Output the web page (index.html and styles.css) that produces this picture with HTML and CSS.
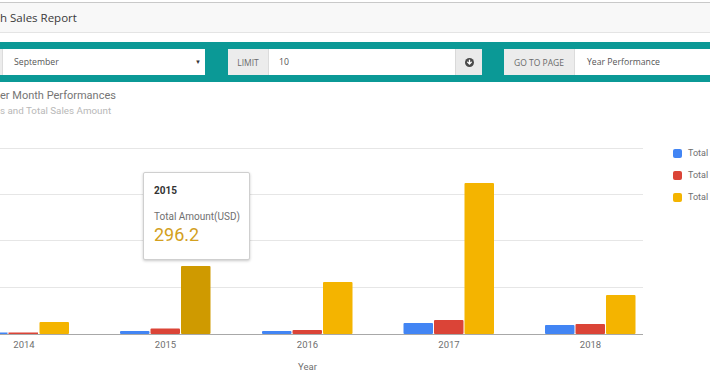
FILE: index.html
```html
<!DOCTYPE html>
<html lang="en">
<head>
<meta charset="utf-8">
<title>Sales Report</title>
<link rel="stylesheet" href="styles.css">
</head>
<body>
<div class="page">
  <header class="report-head">
    <h1 class="report-title">h Sales Report</h1>
  </header>

  <div class="filters">
    <div class="group g-month">
      <span class="addon stub"></span>
      <div class="field select">September<span class="caret">&#9660;</span></div>
    </div>
    <div class="group g-limit">
      <span class="addon">LIMIT</span>
      <div class="field">10</div>
      <span class="btn">
        <svg width="9" height="9" viewBox="0 0 10 10" aria-hidden="true">
          <circle cx="5" cy="5" r="5" fill="#4a4a4a"/>
          <path d="M5 2.3v4.2M2.9 4.6L5 6.8 7.1 4.6" fill="none" stroke="#fff" stroke-width="1.5" stroke-linecap="round" stroke-linejoin="round"/>
        </svg>
      </span>
    </div>
    <div class="group g-page">
      <span class="addon">GO TO PAGE</span>
      <div class="field">Year Performance</div>
    </div>
  </div>

  <section class="chart">
    <div class="chart-title">er Month Performances</div>
    <div class="chart-sub">s and Total Sales Amount</div>
    <div class="chart-body">
      <div class="plot">
        <svg class="plot-svg" width="660" height="260" viewBox="0 0 660 260">
          <g class="grid">
            <line x1="0" y1="28.5" x2="643" y2="28.5"/>
            <line x1="0" y1="74.5" x2="643" y2="74.5"/>
            <line x1="0" y1="120.5" x2="643" y2="120.5"/>
            <line x1="0" y1="167.5" x2="643" y2="167.5"/>
          </g>
          <!-- 2014 -->
          <rect class="b-blue" x="-22" y="212.5" width="29.5" height="1.5"/>
          <rect class="b-red" x="8.5" y="212.5" width="29.5" height="1.5"/>
          <rect class="b-yel" x="39.5" y="202" width="29.5" height="12" rx="1"/>
          <!-- 2015 -->
          <rect class="b-blue" x="120" y="211" width="29.5" height="3" rx="1"/>
          <rect class="b-red" x="150.5" y="208.5" width="29.5" height="5.5" rx="1"/>
          <rect class="b-hov" x="181" y="146" width="29.5" height="68" rx="1"/>
          <!-- 2016 -->
          <rect class="b-blue" x="262" y="211" width="29.5" height="3" rx="1"/>
          <rect class="b-red" x="292.5" y="210" width="29.5" height="4" rx="1"/>
          <rect class="b-yel" x="323" y="162" width="29.5" height="52" rx="1"/>
          <!-- 2017 -->
          <rect class="b-blue" x="403.5" y="203" width="29.5" height="11" rx="1"/>
          <rect class="b-red" x="434" y="200" width="29.5" height="14" rx="1"/>
          <rect class="b-yel" x="464.5" y="63" width="29.5" height="151" rx="1"/>
          <!-- 2018 -->
          <rect class="b-blue" x="545" y="205" width="29.5" height="9" rx="1"/>
          <rect class="b-red" x="575.5" y="204" width="29.5" height="10" rx="1"/>
          <rect class="b-yel" x="606" y="175" width="29.5" height="39" rx="1"/>

          <line class="baseline" x1="0" y1="214.5" x2="643" y2="214.5"/>

          <g class="xlabels">
            <text x="24" y="228">2014</text>
            <text x="165.5" y="228">2015</text>
            <text x="307.5" y="228">2016</text>
            <text x="449" y="228">2017</text>
            <text x="590.5" y="228">2018</text>
          </g>
          <text class="xtitle" x="307.5" y="250">Year</text>
        </svg>

        <div class="tooltip">
          <div class="tt-year">2015</div>
          <div class="tt-label">Total Amount(USD)</div>
          <div class="tt-value">296.2</div>
        </div>
      </div>

      <ul class="legend">
        <li><span class="swatch sw-blue"></span>Total Orders</li>
        <li><span class="swatch sw-red"></span>Total Items</li>
        <li><span class="swatch sw-yel"></span>Total Amount(USD)</li>
      </ul>
    </div>
  </section>
</div>
</body>
</html>
```

FILE: styles.css
```css
* { box-sizing: border-box; }

html, body {
  margin: 0;
  padding: 0;
  background: #fff;
}

.page {
  width: 710px;
  height: 380px;
  overflow: hidden;
  font-family: "Open Sans", "Liberation Sans", sans-serif;
}

/* header */
.report-head {
  margin-top: 2px;
  height: 31px;
  background: #f8f8f8;
  border-top: 1px solid #c9c9c9;
  border-bottom: 1px solid #e4e4e4;
}

.report-title {
  margin: 0;
  font-size: 11.5px;
  font-weight: 400;
  line-height: 29px;
  color: #3a3a3a;
}

/* filters */
.filters {
  margin-top: 9px;
  height: 40px;
  padding: 7px 0;
  background: #0b9996;
  display: flex;
  gap: 23px;
  font-size: 8.7px;
  color: #555;
}

.group {
  display: flex;
  height: 26px;
  flex: none;
}

.g-month { width: 205px; }
.g-limit { width: 254px; }
.g-page { width: 260px; margin-left: -1px; }

.addon {
  display: flex;
  align-items: center;
  justify-content: center;
  background: #ececec;
  color: #6a6a6a;
  border-right: 1px solid #dcdcdc;
  flex: none;
  font-size: 8.5px;
}

.stub { width: 3px; }
.g-limit .addon { width: 41px; }
.g-page .addon { width: 71px; }

.field {
  flex: 1;
  background: #fff;
  display: flex;
  align-items: center;
  padding-left: 10px;
  color: #555;
}

.select {
  padding-left: 11px;
  justify-content: space-between;
  padding-right: 4px;
}

.caret {
  font-size: 6px;
  color: #333;
}

.g-page .field { padding-left: 12px; }

.btn {
  width: 27px;
  flex: none;
  display: flex;
  align-items: center;
  justify-content: center;
  background: #eaeaea;
  border-left: 1px solid #d9d9d9;
}

/* chart */
.chart {
  font-family: Roboto, "Liberation Sans", sans-serif;
}

.chart-title {
  margin-top: 6px;
  font-size: 11px;
  line-height: 15px;
  color: #757575;
}

.chart-sub {
  margin-top: 1px;
  font-size: 9.8px;
  line-height: 13px;
  color: #b8b8b8;
}

.chart-body {
  margin-top: 3px;
  display: flex;
}

.plot {
  position: relative;
  width: 660px;
  height: 260px;
  flex: none;
}

.plot-svg {
  display: block;
  overflow: visible;
}

.grid line {
  stroke: #e6e6e6;
  stroke-width: 1;
}

.baseline {
  stroke: #a8a8a8;
  stroke-width: 1;
}

.b-blue { fill: #4285f4; }
.b-red { fill: #db4437; }
.b-yel { fill: #f4b400; }
.b-hov { fill: #cf9a00; }

.xlabels text,
.xtitle {
  font-family: Roboto, "Liberation Sans", sans-serif;
  font-size: 9.5px;
  fill: #6f6f6f;
  text-anchor: middle;
}

.tooltip {
  position: absolute;
  left: 143px;
  top: 52px;
  width: 107px;
  height: 88px;
  background: #fff;
  border: 1px solid #cfcfcf;
  border-radius: 2px;
  box-shadow: 0 1px 3px rgba(0, 0, 0, 0.22);
  padding: 11px 10px 0;
  display: flex;
  flex-direction: column;
  white-space: nowrap;
}

.tt-year {
  font-size: 10px;
  font-weight: 700;
  line-height: 14px;
  color: #333;
}

.tt-label {
  margin-top: 12px;
  font-size: 10px;
  line-height: 14px;
  color: #6f6f6f;
}

.tt-value {
  margin-top: 1px;
  font-size: 18px;
  line-height: 20px;
  color: #d3a020;
}

.legend {
  list-style: none;
  margin: 0;
  padding: 22px 0 0 13px;
  width: 50px;
  flex: none;
  white-space: nowrap;
  overflow: hidden;
}

.legend li {
  display: flex;
  align-items: center;
  height: 22px;
  font-size: 9px;
  color: #6f6f6f;
}

.swatch {
  width: 9px;
  height: 9px;
  border-radius: 2px;
  margin-right: 6px;
  flex: none;
}

.sw-blue { background: #4285f4; }
.sw-red { background: #db4437; }
.sw-yel { background: #f4b400; }
```
